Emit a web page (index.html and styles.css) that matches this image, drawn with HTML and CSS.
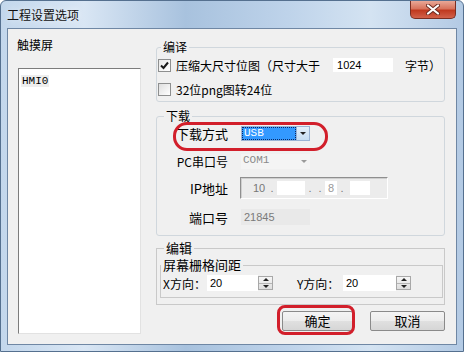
FILE: index.html
```html
<!DOCTYPE html>
<html lang="zh-CN">
<head>
  <meta charset="UTF-8" />
  <title>工程设置选项</title>
  <link rel="stylesheet" href="styles.css">
</head>
<body>
  <div class="window">
    <!-- Title bar -->
    <div class="titlebar">
      <span class="title">工程设置选项</span>
      <span class="close">
        <svg width="14" height="11" viewBox="0 0 14 11">
          <path d="M2 1.5 L12 9.5 M12 1.5 L2 9.5" stroke="#6b2a20" stroke-width="4" stroke-linecap="round"/>
          <path d="M2 1.5 L12 9.5 M12 1.5 L2 9.5" stroke="#ffffff" stroke-width="2.2" stroke-linecap="round"/>
        </svg>
      </span>
    </div>

    <div class="client">
      <!-- Touch screen list -->
      <div class="left">
        <div class="caption">触摸屏</div>
        <div class="listbox"><span class="item">HMI0</span></div>
      </div>

      <div class="right">
        <fieldset class="group compile">
          <legend>编译</legend>
          <div class="check-row">
            <span class="check on">
              <svg width="9" height="9" viewBox="0 0 9 9"><path d="M1 4.5 L3.5 7 L8 1.5" fill="none" stroke="#1a1a1a" stroke-width="2"/></svg>
            </span>
            <span>压缩大尺寸位图（尺寸大于</span>
            <span class="num-box">1024</span>
            <span class="unit">字节）</span>
          </div>
          <div class="check-row second">
            <span class="check"></span>
            <span>32位png图转24位</span>
          </div>
        </fieldset>

        <fieldset class="group download">
          <legend>下载</legend>
          <div class="field first">
            <span class="label">下载方式</span>
            <span class="select active">
              <span class="value mono">USB</span>
              <span class="drop"><span class="arrow"></span></span>
            </span>
            <span class="mark-oval"></span>
          </div>
          <div class="field second">
            <span class="label">PC串口号</span>
            <span class="select disabled">
              <span class="value mono">COM1</span>
              <span class="drop"><span class="arrow"></span></span>
            </span>
          </div>
          <div class="field third">
            <span class="label">IP地址</span>
            <span class="ip-box">
              <span class="ip-part">10</span>
              <span class="dot">.</span>
              <span class="blank wide"></span>
              <span class="dot">.</span>
              <span class="dot">.</span>
              <span class="blank small">8</span>
              <span class="dot">.</span>
              <span class="blank last"></span>
            </span>
          </div>
          <div class="field fourth">
            <span class="label">端口号</span>
            <span class="port-box">21845</span>
          </div>
        </fieldset>

        <fieldset class="group edit">
          <legend>编辑</legend>
          <fieldset class="group grid-box">
            <legend>屏幕栅格间距</legend>
            <div class="spin-row">
              <span class="spin-label x">X方向：</span>
              <span class="spin-input">20</span>
              <span class="spin"><span class="up"></span><span class="down"></span></span>
              <span class="spin-label y">Y方向：</span>
              <span class="spin-input wide">20</span>
              <span class="spin"><span class="up"></span><span class="down"></span></span>
            </div>
          </fieldset>
        </fieldset>

        <div class="buttons">
          <span class="btn-wrap">
            <button class="btn ok">确定</button>
            <span class="mark-rect"></span>
          </span>
          <button class="btn cancel">取消</button>
        </div>
      </div>
    </div>
  </div>
</body>
</html>
```

FILE: styles.css
```css
* {
  box-sizing: border-box;
}

body {
  margin: 0;
  background: #ffffff;
  font-family: "Noto Sans CJK SC", sans-serif;
  font-size: 12px;
  color: #000;
}

/* Window frame */
.window {
  width: 464px;
  height: 352px;
  padding: 0 6px 6px;
  border: 1px solid #55708f;
  border-radius: 6px 6px 0 0;
  background: linear-gradient(90deg, #c3d7ec 0%, #d9e6f4 18%, #a8c2de 40%, #bed3ea 62%, #d4e3f2 80%, #b3cae4 100%);
  display: flex;
  flex-direction: column;
}

.titlebar {
  height: 27px;
  display: flex;
  align-items: center;
}

.title {
  font-size: 12px;
  color: #111;
  text-shadow: 0 0 6px rgba(255, 255, 255, 0.9);
}

.close {
  margin-left: auto;
  margin-right: 1px;
  align-self: flex-start;
  width: 46px;
  height: 18px;
  border: 1px solid #7a2e22;
  border-top: none;
  border-radius: 0 0 5px 5px;
  background: linear-gradient(to bottom, #e9a897 0%, #d8735c 45%, #c0391f 55%, #d2614a 100%);
  display: flex;
  align-items: center;
  justify-content: center;
}

.client {
  height: 317px;
  border: 1px solid #6f87a4;
  background: #f0f0f0;
  padding: 9px 0 0 9px;
  display: flex;
}

/* Left column */
.left {
  width: 124px;
}

.caption {
  line-height: 14px;
  height: 14px;
}

.listbox {
  margin: 16px 0 0 1px;
  width: 123px;
  height: 266px;
  background: #fff;
  border: 1px solid;
  border-color: #7c7c7c #e2e2e2 #e2e2e2 #7c7c7c;
  padding: 1px 2px;
}

.mono {
  font-family: "Liberation Mono", monospace;
  font-size: 11px;
}

.item {
  display: inline-block;
  font-family: "Liberation Mono", monospace;
  font-size: 11px;
  line-height: 12px;
  padding: 0 1px;
  background: #eeeeee;
}

/* Right column */
.right {
  margin: 2px 0 0 15px;
  width: 289px;
}

.group {
  margin: 0;
  min-width: 0;
  border: 1px solid #d0d7dd;
  border-radius: 3px;
}

.group legend {
  line-height: 14px;
  height: 14px;
  padding: 0 2px;
}

.compile {
  padding: 3px 0 4px 1px;
}

.compile legend {
  margin-left: 3px;
}

.check-row {
  display: flex;
  align-items: center;
  height: 16px;
  white-space: nowrap;
}

.check-row.second {
  margin-top: 8px;
}

.check {
  width: 13px;
  height: 13px;
  margin-right: 5px;
  border: 1px solid #8e8f8f;
  background: linear-gradient(135deg, #dedede, #ffffff);
  display: flex;
  align-items: center;
  justify-content: center;
}

.check.on {
  background: linear-gradient(135deg, #e8e8e8, #ffffff);
}

.num-box {
  margin-left: 13px;
  width: 60px;
  height: 14px;
  background: #fff;
  padding-left: 4px;
  font-family: "Liberation Sans", sans-serif;
  font-size: 11px;
  line-height: 14px;
}

.unit {
  margin-left: 12px;
}

/* Download group */
.download {
  margin-top: 7px;
  padding: 2px 0 10px 0;
}

.download legend {
  margin-left: 7px;
}

.field {
  position: relative;
  display: flex;
  align-items: center;
  height: 16px;
  gap: 13px;
}

.field.second {
  margin-top: 12px;
}

.field.third {
  margin-top: 8px;
  height: 22px;
}

.field.fourth {
  margin-top: 10px;
}

.label {
  width: 71px;
  text-align: right;
  font-size: 13px;
  white-space: nowrap;
}

.field.second .label {
  font-size: 12px;
}

.select {
  width: 69px;
  height: 15px;
  display: flex;
}

.select .value {
  flex: 1;
  line-height: 13px;
  padding-left: 2px;
}

.select .drop {
  width: 13px;
  display: flex;
  align-items: center;
  justify-content: center;
}

.arrow {
  width: 0;
  height: 0;
  border-left: 3px solid transparent;
  border-right: 3px solid transparent;
  border-top: 3px solid #222;
}

.select.active {
  border: 1px solid #9ab3d4;
  background: #fff;
}

.select.active .value {
  background: #3399ff;
  color: #fff;
  outline: 1px dotted #0a2a66;
  outline-offset: -1px;
}

.select.active .drop {
  background: linear-gradient(to bottom, #e4f0fb, #c6ddf3);
  border-left: 1px solid #9ab3d4;
}

.select.disabled {
  background: #f4f4f4;
  color: #8a8a8a;
}

.select.disabled .arrow {
  border-top-color: #9a9a9a;
}

.ip-box {
  width: 148px;
  height: 22px;
  margin-left: -1px;
  border: 1px solid;
  border-color: #8f8f8f #ffffff #ffffff #8f8f8f;
  box-shadow: inset 1px 1px 0 #cfcfcf;
  background: #ececec;
  display: flex;
  align-items: center;
  padding-left: 12px;
  color: #777;
  font-family: "Liberation Sans", sans-serif;
  font-size: 11px;
}

.ip-part {
  width: 14px;
}

.dot {
  width: 10px;
  text-align: center;
}

.blank {
  height: 14px;
  background: #fff;
  color: #999;
  text-align: center;
  line-height: 14px;
}

.blank.wide {
  width: 28px;
}

.blank.small {
  width: 12px;
}

.blank.last {
  width: 20px;
  margin-left: 3px;
}

.port-box {
  width: 69px;
  height: 16px;
  background: #e9e9e9;
  color: #7a7a7a;
  padding-left: 3px;
  line-height: 16px;
  font-family: "Liberation Sans", sans-serif;
  font-size: 11px;
}

/* Edit group */
.edit {
  margin-top: 5px;
  padding: 3px 1px 6px 3px;
  border-radius: 0;
  border-color: #c9c9c9;
  font-size: 13px;
}

.edit > legend {
  margin-left: 4px;
}

.grid-box {
  padding: 3px 0 6px 2px;
  border-radius: 0;
  border-color: #c9c9c9;
}

.grid-box legend {
  margin-left: -2px;
}

.spin-row {
  display: flex;
  align-items: center;
  height: 16px;
  font-size: 12px;
}

.spin-label {
  width: 44px;
  flex-shrink: 0;
  white-space: nowrap;
}

.spin-label.y {
  margin-left: 24px;
  width: 46px;
}

.spin-input {
  width: 51px;
  height: 16px;
  background: #fff;
  padding-left: 3px;
  line-height: 16px;
  font-family: "Liberation Sans", sans-serif;
  font-size: 11px;
}

.spin-input.wide {
  width: 53px;
}

.spin {
  width: 15px;
  height: 14px;
  border: 1px solid #a8a8a8;
  background: linear-gradient(to bottom, #f6f6f6, #dedede);
  display: flex;
  flex-direction: column;
}

.spin span {
  flex: 1;
  display: flex;
  align-items: center;
  justify-content: center;
}

.spin .up {
  border-bottom: 1px solid #b5b5b5;
}

.spin .up::after {
  content: "";
  border-left: 3px solid transparent;
  border-right: 3px solid transparent;
  border-bottom: 3px solid #222;
}

.spin .down::after {
  content: "";
  border-left: 3px solid transparent;
  border-right: 3px solid transparent;
  border-top: 3px solid #222;
}

/* Buttons */
.buttons {
  margin-top: 6px;
  display: flex;
  justify-content: flex-end;
  gap: 17px;
}

.btn-wrap {
  position: relative;
  display: flex;
}

.btn {
  height: 20px;
  margin: 0;
  padding: 0;
  border: 1px solid #8a8a8a;
  border-radius: 2px;
  background: linear-gradient(to bottom, #f4f4f4 0%, #ececec 50%, #e0e0e0 51%, #d6d6d6 100%);
  font-family: "Noto Sans CJK SC", sans-serif;
  font-size: 13px;
  color: #000;
  line-height: 18px;
}

.btn.ok {
  width: 71px;
}

.btn.cancel {
  width: 75px;
}

/* Red annotation marks */
.mark-oval {
  position: absolute;
  left: 16px;
  top: -3px;
  width: 155px;
  height: 29px;
  border: 3px solid #d21f2b;
  border-radius: 14px;
}

.mark-rect {
  position: absolute;
  left: -5px;
  top: -6px;
  width: 78px;
  height: 30px;
  border: 3px solid #d21f2b;
  border-radius: 8px;
}
```
